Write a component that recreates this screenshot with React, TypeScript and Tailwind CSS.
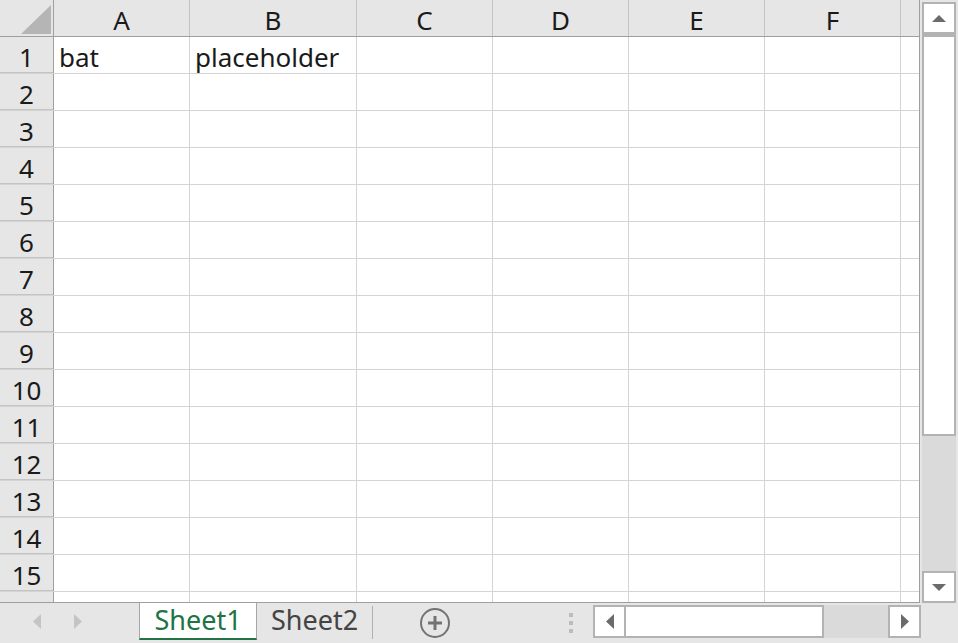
import React from "react";

const cols = [
  { name: "A", w: "w-[136px]" },
  { name: "B", w: "w-[167px]" },
  { name: "C", w: "w-[136px]" },
  { name: "D", w: "w-[136px]" },
  { name: "E", w: "w-[136px]" },
  { name: "F", w: "w-[136px]" },
];

const data: Record<number, string[]> = {
  1: ["bat", "placeholder"],
};

const font = { fontFamily: '"Noto Sans", "DejaVu Sans", sans-serif' };

function Tri({ dir, className }: { dir: "up" | "down" | "left" | "right"; className?: string }) {
  const pts = {
    up: "0,7 7,0 14,7",
    down: "0,0 14,0 7,7",
    left: "8,0 8,15 0,7.5",
    right: "0,0 8,7.5 0,15",
  }[dir];
  const vertical = dir === "up" || dir === "down";
  return (
    <svg
      width={vertical ? 14 : 8}
      height={vertical ? 7 : 15}
      viewBox={vertical ? "0 0 14 7" : "0 0 8 15"}
      className={className}
    >
      <polygon points={pts} fill="currentColor" />
    </svg>
  );
}

function ScrollButton({ dir, className }: { dir: "up" | "down" | "left" | "right"; className: string }) {
  return (
    <div className={`flex items-center justify-center bg-white border-2 border-[#b3b3b3] text-[#6b6b6b] ${className}`}>
      <Tri dir={dir} />
    </div>
  );
}

export default function App() {
  const rows = Array.from({ length: 15 }, (_, i) => i + 1);

  return (
    <div className="w-[958px] h-[643px] bg-[#e6e6e6] overflow-hidden text-[#1a1a1a]" style={font}>
      <div className="flex h-[603px]">
        {/* grid */}
        <div className="w-[920px] h-full flex flex-col border-r border-b border-[#9f9f9f] bg-white overflow-hidden">
          <div className="flex h-[37px] shrink-0 bg-[#e6e6e6] border-b border-[#9f9f9f]">
            <div className="w-[54px] h-full border-r border-[#9f9f9f] relative">
              <svg width="30" height="29" viewBox="0 0 30 29" className="absolute left-[21px] top-[5px]">
                <polygon points="30,0 30,29 0,29" fill="#b5b5b5" />
              </svg>
            </div>
            {cols.map((c) => (
              <div
                key={c.name}
                className={`${c.w} h-full border-r border-[#c4c4c4] flex items-center justify-center pt-[3px] text-[26px] leading-none`}
              >
                {c.name}
              </div>
            ))}
            <div className="flex-1" />
          </div>
          {rows.map((r) => (
            <div key={r} className="flex h-[37px] shrink-0 border-b border-[#d4d4d4]">
              <div className="w-[54px] h-full bg-[#e6e6e6] border-r border-[#9f9f9f] flex items-center justify-center pt-[4px] text-[26px] leading-none shadow-[inset_0_-1px_0_#c4c4c4]">
                {r}
              </div>
              {cols.map((c, ci) => (
                <div
                  key={c.name}
                  className={`${c.w} h-full border-r border-[#d4d4d4] flex items-center pl-[5px] pt-[4px] text-[26px] leading-none whitespace-nowrap`}
                >
                  {data[r]?.[ci] ?? ""}
                </div>
              ))}
              <div className="flex-1" />
            </div>
          ))}
          <div className="flex flex-1">
            <div className="w-[54px] h-full bg-[#e6e6e6] border-r border-[#9f9f9f]" />
            {cols.map((c) => (
              <div key={c.name} className={`${c.w} h-full border-r border-[#d4d4d4]`} />
            ))}
          </div>
        </div>

        {/* vertical scrollbar */}
        <div className="ml-[2px] w-[34px] pt-[2px] flex flex-col">
          <div className="flex-1 flex flex-col bg-[#dadada]">
            <ScrollButton dir="up" className="h-[32px] shrink-0" />
            <div className="h-[402px] shrink-0 bg-white border-2 border-[#b3b3b3] border-t-[3px]" />
            <div className="flex-1" />
            <ScrollButton dir="down" className="h-[32px] shrink-0" />
          </div>
        </div>
      </div>

      {/* bottom bar */}
      <div className="flex items-start h-[40px]">
        <div className="w-[139px] h-[37px] flex items-center text-[#c4c4c4]">
          <Tri dir="left" className="ml-[33px]" />
          <Tri dir="right" className="ml-[33px]" />
        </div>
        <div className="w-[118px] h-[37px] pb-[2px] bg-white border-x border-[#a6a6a6] border-b-2 border-b-[#217346] flex items-center justify-center text-[27px] leading-none text-[#217346]">
          Sheet1
        </div>
        <div className="w-[115px] h-[37px] pb-[4px] flex items-center justify-center text-[27px] leading-none text-[#444444]">
          Sheet2
        </div>
        <div className="w-px h-[33px] mt-[3px] bg-[#b0b0b0]" />
        <div className="ml-[47px] mt-[5px]">
          <svg width="30" height="30" viewBox="0 0 30 30">
            <circle cx="15" cy="15" r="14" fill="none" stroke="#737373" strokeWidth="2" />
            <line x1="15" y1="8" x2="15" y2="22" stroke="#737373" strokeWidth="3" />
            <line x1="8" y1="15" x2="22" y2="15" stroke="#737373" strokeWidth="3" />
          </svg>
        </div>
        <div className="ml-[119px] mt-[10px] flex flex-col gap-[4px]">
          <div className="w-[4px] h-[4px] bg-[#bcbcbc]" />
          <div className="w-[4px] h-[4px] bg-[#bcbcbc]" />
          <div className="w-[4px] h-[4px] bg-[#bcbcbc]" />
        </div>
        <div className="ml-[20px] mt-[2px] w-[328px] h-[33px] flex bg-[#dadada]">
          <ScrollButton dir="left" className="w-[33px] h-full shrink-0" />
          <div className="w-[198px] h-full bg-white border-2 border-[#b3b3b3] border-l-0" />
          <div className="flex-1" />
          <ScrollButton dir="right" className="w-[33px] h-full shrink-0" />
        </div>
      </div>
    </div>
  );
}
